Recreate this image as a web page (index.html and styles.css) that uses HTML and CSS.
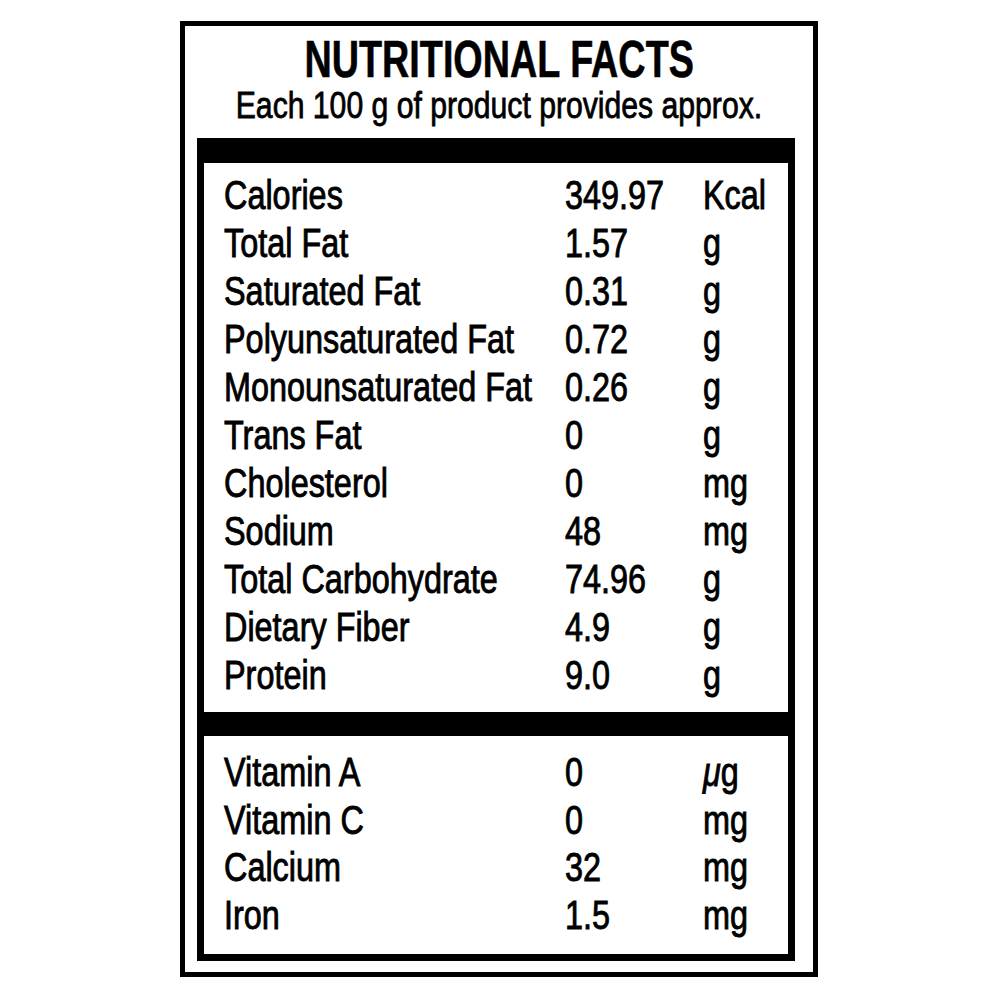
FILE: index.html
```html
<!DOCTYPE html>
<html>
<head>
<meta charset="utf-8">
<link rel="stylesheet" href="styles.css">
</head>
<body>
<div class="label">
  <h1 class="title"><span>NUTRITIONAL FACTS</span></h1>
  <p class="subtitle"><span>Each 100 g of product provides approx.</span></p>
  <div class="panel">
    <div class="section main">
      <div class="row"><span>Calories</span><span>349.97</span><span>Kcal</span></div>
      <div class="row"><span>Total Fat</span><span>1.57</span><span>g</span></div>
      <div class="row"><span>Saturated Fat</span><span>0.31</span><span>g</span></div>
      <div class="row"><span>Polyunsaturated Fat</span><span>0.72</span><span>g</span></div>
      <div class="row"><span>Monounsaturated Fat</span><span>0.26</span><span>g</span></div>
      <div class="row"><span>Trans Fat</span><span>0</span><span>g</span></div>
      <div class="row"><span>Cholesterol</span><span>0</span><span>mg</span></div>
      <div class="row"><span>Sodium</span><span>48</span><span>mg</span></div>
      <div class="row"><span>Total Carbohydrate</span><span>74.96</span><span>g</span></div>
      <div class="row"><span>Dietary Fiber</span><span>4.9</span><span>g</span></div>
      <div class="row"><span>Protein</span><span>9.0</span><span>g</span></div>
    </div>
    <div class="section vitamins">
      <div class="row"><span>Vitamin A</span><span>0</span><span><i class="mu">μ</i>g</span></div>
      <div class="row"><span>Vitamin C</span><span>0</span><span>mg</span></div>
      <div class="row"><span>Calcium</span><span>32</span><span>mg</span></div>
      <div class="row"><span>Iron</span><span>1.5</span><span>mg</span></div>
    </div>
  </div>
</div>
</body>
</html>
```

FILE: styles.css
```css
html, body {
  margin: 0;
  padding: 0;
  background: #fff;
}

body {
  font-family: "Liberation Sans", Arial, sans-serif;
  color: #000;
}

.label {
  box-sizing: border-box;
  margin: 21px 0 0 180px;
  width: 638px;
  height: 956px;
  border: 5px solid #000;
  padding-top: 7px;
}

.title {
  display: flex;
  justify-content: center;
  margin: 0;
  font-size: 52px;
  line-height: 52px;
  font-weight: 700;
  white-space: nowrap;
  -webkit-text-stroke: 0.6px #000;
}

.title span {
  display: inline-block;
  transform: scaleX(0.726);
}

.subtitle {
  display: flex;
  justify-content: center;
  margin: 2px 0 0;
  font-size: 37px;
  line-height: 37px;
  white-space: nowrap;
  -webkit-text-stroke: 0.8px #000;
}

.subtitle span {
  display: inline-block;
  transform: scaleX(0.815);
}

.panel {
  box-sizing: border-box;
  margin: 14px 0 0 12px;
  width: 598px;
  border-left: 7px solid #000;
  border-right: 7px solid #000;
  border-top: 25px solid #000;
  border-bottom: 7px solid #000;
}

.section.main {
  padding: 8px 0 13px;
  border-bottom: 24px solid #000;
}

.section.vitamins {
  padding: 13px 0 14px;
}

.row {
  display: grid;
  grid-template-columns: 341px 138px 1fr;
  padding-left: 20px;
  font-size: 40px;
  line-height: 48px;
  white-space: nowrap;
  -webkit-text-stroke: 0.9px #000;
}

.row span {
  display: inline-block;
  transform: scaleX(0.81);
  transform-origin: 0 50%;
}

.vitamins .row {
  line-height: 47.7px;
}

.mu {
  font-style: italic;
}
```
